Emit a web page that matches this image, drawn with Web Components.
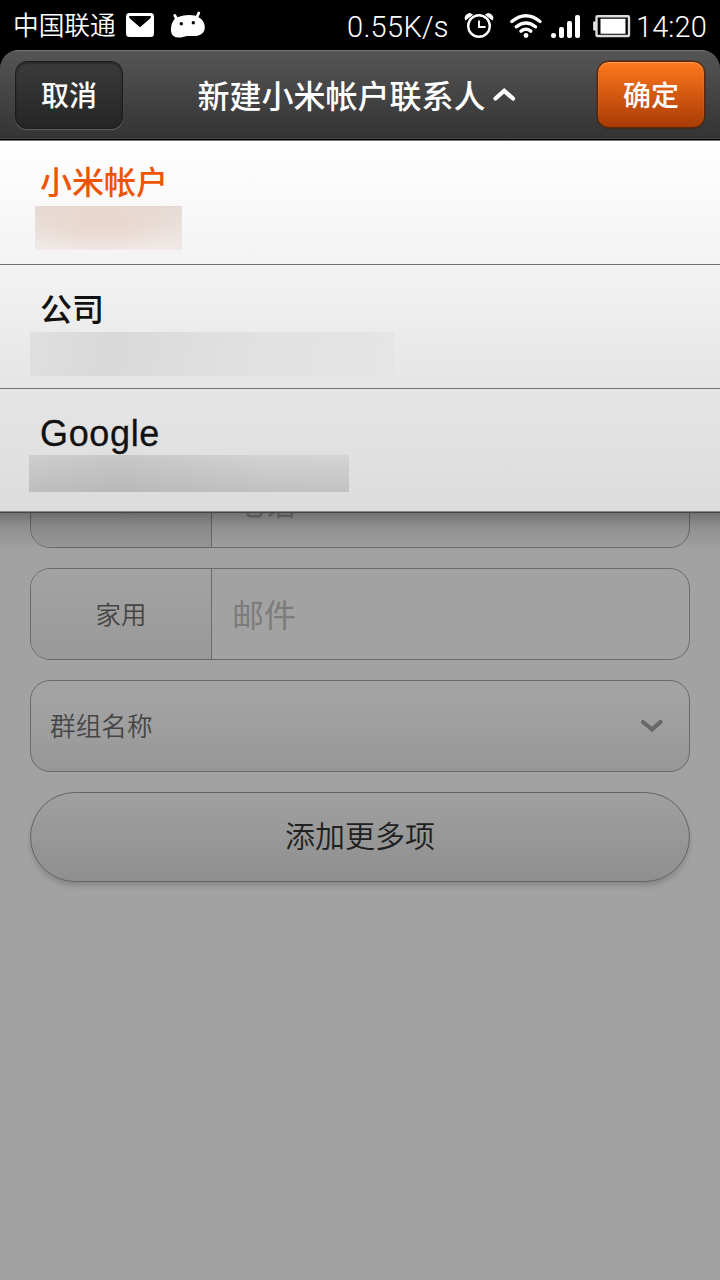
<!DOCTYPE html>
<html lang="zh-CN">
<head>
<meta charset="utf-8">
<title>新建联系人</title>
<style>
html,body{margin:0;height:100%;background:#000;font-family:"Liberation Sans","Noto Sans CJK SC",sans-serif}
body{width:720px;height:1280px;overflow:hidden}
</style>
</head>
<body>
<contact-screen></contact-screen>
<script>
const define = (name, html) => {
  const tpl = document.createElement('template');
  tpl.innerHTML = html;
  customElements.define(name, class extends HTMLElement {
    constructor() {
      super();
      this.attachShadow({mode: 'open'}).append(tpl.content.cloneNode(true));
    }
  });
};

define('status-bar', `
<style>
:host{display:flex;height:50px;box-sizing:border-box;background:#000;color:#fff;align-items:center;padding:0 12px 0 13px;white-space:nowrap}
.carrier{font-size:25.7px;line-height:50px;width:103px;padding-top:2px;font-weight:350}
.num{font-family:"Roboto","Liberation Sans",sans-serif;font-weight:300;line-height:50px;padding-top:4px}
.speed{font-size:29px;margin-left:auto;width:102px;letter-spacing:.3px}
.time{font-size:29px;width:72px;margin-left:5px;letter-spacing:.1px}
svg{display:block;flex:none}
</style>
<span class="carrier">中国联通</span>
<svg style="margin-left:10px" width="28" height="50" viewBox="126 0 28 50"><rect x="126" y="13" width="28" height="24" rx="3.5" fill="#fff"/><path d="M129 16h22q0 2-2 3.500l-9 7.800-9-7.800q-2-1.500-2-3.500z" fill="#000"/></svg>
<svg style="margin-left:16px" width="37" height="50" viewBox="170 0 37 50"><path d="M174.800 15.500l2.200 4M198.800 13l-2.300 5" stroke="#fff" stroke-width="2.800" stroke-linecap="round"/><path d="M176 18C183 14.500 194 14 199 17.500C206 21 206.500 31 201.500 34C198 36.500 194 36 189 36C184 36 183 38 178 37.500C172 37 170.500 33 171 28C171.300 24 173 20 176 18z" fill="#fff"/><circle cx="181.300" cy="23.700" r="1.700"/><circle cx="193.300" cy="22.700" r="1.700"/></svg>
<span class="num speed">0.55K/s</span>
<svg style="margin-left:15px" width="30" height="50" viewBox="464 0 30 50" fill="none" stroke="#fff"><circle cx="479" cy="26" r="10.800" stroke-width="2.400"/><path d="M479 20.500v6.500h6.500" stroke-width="1.900"/><path d="M465.500 20a4.500 4.500 0 0 1 7-5.300zM492.500 20a4.500 4.500 0 0 0-7-5.300z" fill="#fff" stroke-width="1"/></svg>
<svg style="margin-left:15px" width="34" height="50" viewBox="509 0 34 50" fill="none" stroke="#fff" stroke-width="3.400" stroke-linecap="round"><path d="M511.800 21.500Q526 10 540 21.500M516.200 26.800Q526 19 535.500 26.800M521 31.200Q526 27.500 530.800 31.200"/><circle cx="526" cy="35.500" r="2.400" fill="#fff" stroke="none"/></svg>
<svg style="margin-left:8px" width="30" height="50" viewBox="551 0 30 50" fill="#fff"><rect x="551" y="33" width="5" height="5" rx="2.300"/><rect x="559" y="27" width="5" height="11" rx="2"/><rect x="567" y="21" width="5" height="17" rx="2"/><rect x="575" y="15" width="5" height="23" rx="2"/></svg>
<svg style="margin-left:11px" width="39" height="50" viewBox="592 0 39 50"><rect x="596.500" y="16.300" width="32.500" height="19.700" rx="1" fill="none" stroke="#ddd" stroke-width="2.400"/><path d="M594.500 21.500v9" stroke="#eee" stroke-width="2.600"/><rect x="600.500" y="18.800" width="25" height="15" rx=".5" fill="#fff"/></svg>
<span class="num time">14:20</span>`);

define('bar-button', `
<style>
:host{display:block;flex:none;box-sizing:border-box;width:108px;height:68px;border-radius:12px;font-size:28px;font-weight:500;line-height:70px;text-align:center;color:#fff;border:1px solid #1b1b1b;background:linear-gradient(#3b3b3b,#252525);box-shadow:inset 0 2px 2px rgba(0,0,0,.3),0 1px 1px rgba(255,255,255,.22)}
:host([primary]){height:67px;border:1.500px solid #5c2608;line-height:70px;background:linear-gradient(#ff781d,#a83b05);box-shadow:inset 0 1px 1px #ffa05c,0 0 0 .5px #5c2608,0 1px 1px rgba(0,0,0,.25)}
</style><slot></slot>`);

define('title-bar', `
<style>
:host{display:flex;box-sizing:border-box;height:90px;padding:10px 15px 0;justify-content:space-between;align-items:flex-start;border-radius:19px 19px 0 0;background:linear-gradient(#555,#333);border-top:1px solid #777;box-shadow:inset 0 -1px #000,inset 0 -2px #444}
.title{display:flex;align-items:center;height:68px;font-size:32px;font-weight:500;color:#fff;margin-left:-7px;gap:7px}
.t{line-height:68px;padding-top:3px;white-space:nowrap}
svg{display:block}
</style>
<bar-button>取消</bar-button>
<div class="title"><span class="t"><slot></slot></span><svg width="23" height="14" viewBox="0 0 23 14" fill="none" stroke="#fff" stroke-width="4.200" stroke-linecap="round"><path d="M2.500 10.500L11.200 2.800l8.800 7.700"/></svg></div>
<bar-button primary>确定</bar-button>`);

define('account-option', `
<style>
:host{display:block;box-sizing:border-box;height:124px;border-bottom:1px solid #707070;padding:18px 0 0 40px;color:#111}
:host([selected]){color:#ee5405}
.name{position:relative;top:3px;font-size:32px;line-height:48px;height:48px;font-weight:500}
:host([selected]) .name{top:0}
:host([latin]) .name{font-size:36px;letter-spacing:.65px;font-weight:400;-webkit-text-stroke:.3px #111}
</style>
<div class="name"><slot></slot></div><slot name="detail"></slot>`);

define('redacted-line', `
<style>
:host{display:block;width:var(--w);height:var(--h);margin-left:var(--x);margin-top:var(--y,0);background:var(--bg)}
</style>`);

define('account-menu', `
<style>
:host{display:block;position:absolute;top:0;left:0;right:0;box-sizing:border-box;height:373px;border-top:1px solid #777;background:linear-gradient(#fff,#f3f3f3 124px,#e5e5e5 248px,#dcdcdc);border-bottom:1px solid #444}
:host::after{content:"";position:absolute;left:0;right:0;top:100%;height:38px;margin-top:1px;background:linear-gradient(rgba(0,0,0,.3),rgba(0,0,0,.12) 35%,transparent)}
account-option:last-of-type{height:123px;border-bottom-color:#888}
</style>
<account-option selected>小米帐户<redacted-line slot="detail" style="--x:-5px;--y:-1px;--w:147px;--h:44px;--bg:radial-gradient(ellipse at 45% 35%,#e8d5cb,transparent 75%),linear-gradient(#e5dad5,#f0e9e6)"></redacted-line></account-option>
<account-option>公司<redacted-line slot="detail" style="--x:-10px;--y:1px;--w:364px;--h:44px;--bg:linear-gradient(100deg,#dfdfdf,#d9d9d9 22%,#e1e1e1 60%,#e5e5e5)"></redacted-line></account-option>
<account-option latin>Google<redacted-line slot="detail" style="--x:-11px;--w:320px;--h:37px;--bg:linear-gradient(transparent,rgba(150,150,150,.3)),linear-gradient(90deg,#cecece,#c7c7c7 28%,#d3d3d3 75%,#d4d4d4)"></redacted-line></account-option>`);

define('contact-field', `
<style>
:host{display:flex;flex:none;box-sizing:border-box;height:92px;border:1px solid #6b6b6b;border-radius:20px;overflow:hidden;line-height:90px}
.label{box-sizing:border-box;width:181px;border-right:1px solid #6b6b6b;padding-top:var(--label-shift,1px);text-align:center;font-size:25.500px;font-weight:350;color:#454545;background:linear-gradient(#a3a3a3,#999)}
.hint{font-size:32px;padding:2px 0 0 20px;color:#7c7c7c}
</style>
<div class="label"><slot name="label"></slot></div><div class="hint"><slot></slot></div>`);

define('group-picker', `
<style>
:host{display:flex;flex:none;box-sizing:border-box;height:92px;border:1px solid #6b6b6b;border-radius:20px;align-items:center;justify-content:space-between;padding:0 25px 0 19px;font-size:25.700px;font-weight:350;color:#454545;background:linear-gradient(#a3a3a3 20%,#979797)}
.t{line-height:90px;padding-top:2px}
svg{display:block}
</style>
<span class="t"><slot></slot></span><svg width="24" height="16" viewBox="0 0 24 16" fill="none" stroke="#686868" stroke-width="4.200" stroke-linecap="round"><path d="M3 4l9 7.500 8.500-7.500"/></svg>`);

define('add-button', `
<style>
:host{display:block;flex:none;box-sizing:border-box;height:90px;border:1px solid #626262;border-radius:45px;text-align:center;line-height:88px;font-size:30px;font-weight:350;color:#202020;background:linear-gradient(#a0a0a0,#8f8f8f);box-shadow:0 4px 6px -1px rgba(0,0,0,.2)}
</style><slot></slot>`);

define('contact-form', `
<style>
:host{display:flex;flex-direction:column;box-sizing:border-box;height:100%;padding:316px 30px 0;gap:20px;background:#a2a2a2}
</style>
<contact-field style="--label-shift:0px"><span slot="label">手机</span>电话</contact-field>
<contact-field><span slot="label">家用</span>邮件</contact-field>
<group-picker>群组名称</group-picker>
<add-button>添加更多项</add-button>`);

define('contact-screen', `
<style>
:host{display:flex;flex-direction:column;width:720px;height:1280px;background:#000;overflow:hidden}
main{position:relative;flex:1;overflow:hidden}
</style>
<status-bar></status-bar>
<title-bar>新建小米帐户联系人</title-bar>
<main><contact-form></contact-form><account-menu></account-menu></main>`);
</script>
</body>
</html>
